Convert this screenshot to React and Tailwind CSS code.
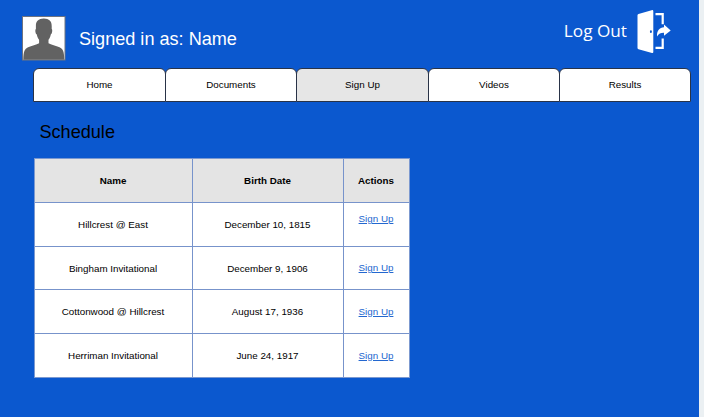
import React from "react";

const tabs = [
  { label: "Home", width: "w-[133px]" },
  { label: "Documents", width: "w-[132px]" },
  { label: "Sign Up", width: "w-[133px]", active: true },
  { label: "Videos", width: "w-[132px]" },
  { label: "Results", width: "w-[132px]" },
];

const rows = [
  { name: "Hillcrest @ East", date: "December 10, 1815", raised: true },
  { name: "Bingham Invitational", date: "December 9, 1906" },
  { name: "Cottonwood @ Hillcrest", date: "August 17, 1936" },
  { name: "Herriman Invitational", date: "June 24, 1917" },
];

function Avatar() {
  return (
    <svg className="h-[45px] w-[44px]" viewBox="0 0 44 45">
      <rect x="0.5" y="0.5" width="42.5" height="43.5" fill="#fff" stroke="#6f7480" />
      <path
        d="M21.800 2.600C16.500 2.600 13.800 5.500 13.900 10v3c-1 .5-.6 4.800.9 5.500.5 2.600 1.200 4 2.300 5.200v3.600c-2.500 1.500-7.600 2.500-11 4C2.500 33 1.500 35.500 1.300 43.700h41c-.2-8.200-1.200-10.700-4.800-12.400-3.400-1.500-8.500-2.500-11-4v-3.600c1.100-1.200 1.800-2.600 2.300-5.200 1.500-.7 1.900-5 .9-5.500v-3c.1-4.500-2.600-7.400-7.900-7.400Z"
        fill="#626262"
      />
    </svg>
  );
}

function ExitIcon() {
  return (
    <svg className="h-[44px] w-[34px]" viewBox="0 0 34 44" fill="none">
      <path
        d="M.5 5.200Q.5 4.200 1.500 4L14.600.2Q16.300-.2 16.300 1.200V42Q16.300 43.200 15 42.900L1.500 39.200Q.5 39 .5 38Z"
        fill="#fff"
      />
      <ellipse cx="13.900" cy="21.700" rx="1" ry="1.400" fill="#0b58cf" />
      <path d="M18.500 4.200h7.200v10M25.700 28.500v9.300h-7.200" stroke="#fff" strokeWidth="2.200" />
      <path d="M20 26.500c-.2-6.200 2.500-8.900 7-9.200v-2.800l6.700 5.900-6.700 5.400v-3c-3.100-.1-5.200.9-7 3.700Z" fill="#fff" />
    </svg>
  );
}

export default function App() {
  return (
    <div className="flex h-[417px] w-[704px] overflow-hidden bg-[#ebf0f3] font-['Liberation_Sans',Arial,sans-serif] text-black">
      <main className="h-full w-[699px] bg-[#0b58cf]">
        <header className="flex h-[68px] items-start pl-[22px]">
          <div className="pt-4">
            <Avatar />
          </div>
          <h1 className="ml-[13px] pt-[28px] text-[18.1px] leading-[22px] whitespace-nowrap text-white">
            Signed in as: Name
          </h1>
          <a className="mr-[28px] ml-auto flex items-start text-white">
            <span className="pt-[19px] font-['Open_Sans',sans-serif] text-[17.2px] leading-[24px]">Log Out</span>
            <span className="ml-[10px] pt-[10px]">
              <ExitIcon />
            </span>
          </a>
        </header>

        <nav className="flex h-[34px] pl-[33px] text-[9.8px]">
          {tabs.map((tab, i) => (
            <div
              key={tab.label}
              className={`${tab.width} ${i > 0 ? "-ml-px" : ""} ${
                tab.active ? "bg-[#e6e6e6]" : "bg-white"
              } flex shrink-0 items-center justify-center rounded-t-[6px] border border-[#293347]`}
            >
              {tab.label}
            </div>
          ))}
        </nav>

        <h2 className="pt-[19px] pl-[39.5px] text-[18.1px] leading-[22px]">Schedule</h2>

        <div className="mt-[15px] ml-[34px] grid w-[376px] grid-cols-[157px_150px_65px] grid-rows-[43px_43px_42px_43px_43px] gap-px border border-[#7c99d0] bg-[#7793cb] text-[9.8px]">
          {["Name", "Birth Date", "Actions"].map((heading) => (
            <div key={heading} className="flex items-center justify-center bg-[#e4e4e4] pt-[2px] pr-px font-bold">
              {heading}
            </div>
          ))}
          {rows.map((row) => (
            <React.Fragment key={row.name}>
              <div className="flex items-center justify-center bg-white pt-[2px] pr-px">{row.name}</div>
              <div className="flex items-center justify-center bg-white pt-[2px] pr-px">{row.date}</div>
              <div className={`flex items-center justify-center bg-white pr-px ${row.raised ? "pb-[10px]" : "pt-px"}`}>
                <a className="text-[#2367cf] underline">Sign Up</a>
              </div>
            </React.Fragment>
          ))}
        </div>
      </main>
    </div>
  );
}
